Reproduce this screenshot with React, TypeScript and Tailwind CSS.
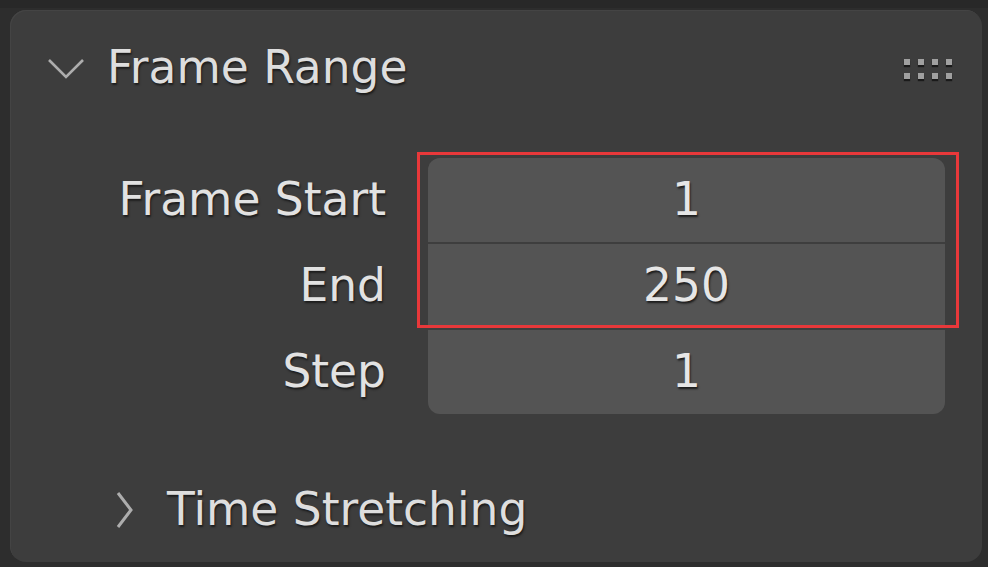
import React from "react";

const font = { fontFamily: '"DejaVu Sans", "Liberation Sans", sans-serif' };

export default function App() {
  const labels = ["Frame Start", "End", "Step"];
  const values = ["1", "250", "1"];
  return (
    <div
      className="relative w-[988px] h-[567px] overflow-hidden bg-[#2d2d2d] pt-[10px] pl-[10px] pr-[6px]"
      style={font}
    >
      <div className="absolute left-0 top-0 w-full h-[8px] bg-[#282828]" />
      <div className="relative h-[552px] rounded-[16px] bg-[#3d3d3d] flex flex-col shadow-[inset_1px_1px_0_#444]">
        {/* header */}
        <div className="h-[116px] flex items-center pl-[36px] pr-[30px]">
          <svg width="40" height="26" viewBox="0 0 40 26" className="shrink-0">
            <path d="M3 5 L20 22 L37 5" fill="none" stroke="#adadad" strokeWidth="2.6" />
          </svg>
          <span className="ml-[21px] text-[45.5px] leading-[52px] text-[#dedede] [text-shadow:1px_2px_2px_#1c1c1c]">
            Frame Range
          </span>
          <div className="ml-auto grid grid-cols-4 gap-x-[8px] gap-y-[8px] mt-[2px]">
            {Array.from({ length: 8 }).map((_, i) => (
              <div key={i} className="w-[6px] h-[6px] bg-[#a0a0a0] shadow-[0_2px_1px_#1a1a1a]" />
            ))}
          </div>
        </div>
        {/* rows */}
        <div className="mt-[32px] flex">
          <div className="w-[376px] flex flex-col gap-[2px]">
            {labels.map((l) => (
              <div
                key={l}
                className="h-[84px] flex items-center justify-end text-[45.5px] leading-[52px] text-[#e2e2e2] [text-shadow:1px_2px_2px_#1c1c1c]"
              >
                {l}
              </div>
            ))}
          </div>
          <div className="ml-[42px] w-[517px] flex flex-col gap-[2px] rounded-[12px] overflow-hidden bg-[#3e3e3e]">
            {values.map((v, i) => (
              <div
                key={i}
                className="h-[84px] flex items-center justify-center bg-[#545454] text-[45.5px] leading-[52px] text-[#e6e6e6] [text-shadow:1px_2px_2px_#1c1c1c]"
              >
                {v}
              </div>
            ))}
          </div>
        </div>
        {/* subpanel */}
        <div className="mt-[66px] h-[60px] flex items-center pl-[106px]">
          <svg width="18" height="38" viewBox="0 0 18 38" className="shrink-0">
            <path d="M2 2 L15 19 L2 36" fill="none" stroke="#adadad" strokeWidth="3" />
          </svg>
          <span className="ml-[33px] text-[45.5px] leading-[52px] text-[#dedede] [text-shadow:1px_2px_2px_#1c1c1c]">
            Time Stretching
          </span>
        </div>
      </div>
      {/* annotation box */}
      <div className="absolute left-[417px] top-[152px] w-[542px] h-[176px] border-[3px] border-[#e8383a]" />
    </div>
  );
}
